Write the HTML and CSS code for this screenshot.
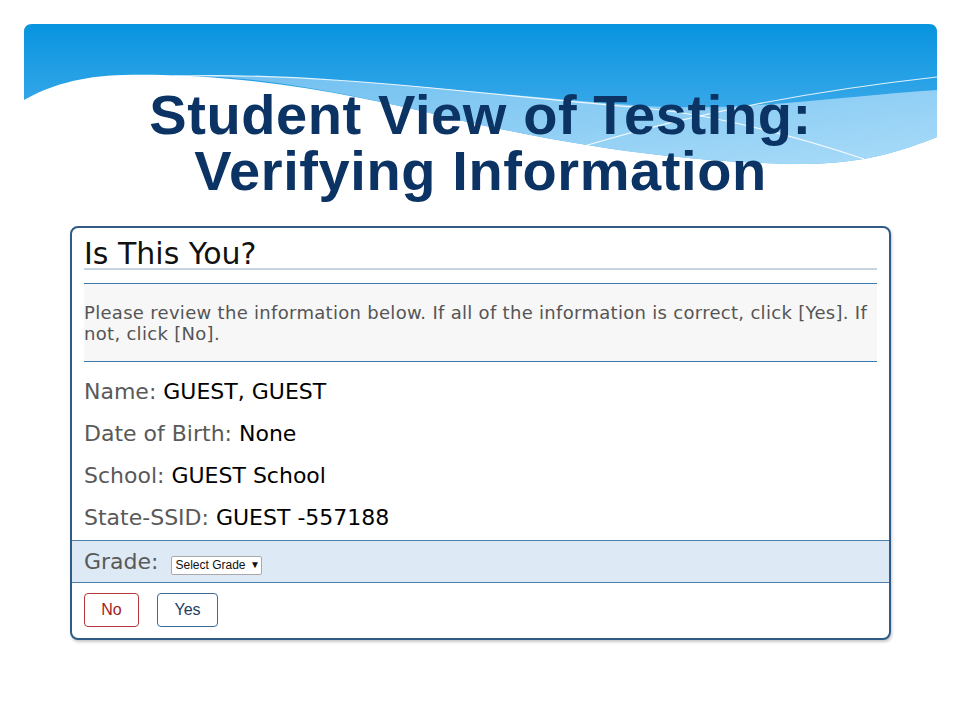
FILE: index.html
```html
<!DOCTYPE html>
<html lang="en">

<head>
  <meta charset="UTF-8">
  <meta name="viewport" content="width=device-width, initial-scale=1.0">
  <title>Student View of Testing</title>
  <link rel="stylesheet" href="styles.css">
</head>

<body>
  <div class="slide">

    <!-- 제목 영역 (물결 배너) -->
    <header class="banner">
      <svg class="banner-bg" viewBox="0 0 913 145" width="913" height="145" aria-hidden="true">
        <defs>
          <linearGradient id="sky" x1="0" y1="0" x2="0" y2="1">
            <stop offset="0" stop-color="#0894df" />
            <stop offset="0.7" stop-color="#3fabea" />
            <stop offset="1" stop-color="#55b5ee" />
          </linearGradient>
          <linearGradient id="band" x1="0" y1="0" x2="1" y2="1">
            <stop offset="0" stop-color="#6fbff0" />
            <stop offset="1" stop-color="#a9dbf8" />
          </linearGradient>
        </defs>
        <path d="M0,76 C25,62 55,52 100,51 C220,49 330,70 430,95 C520,115 640,139 780,140 C840,140 880,126 913,113 L913,8 Q913,0 905,0 L8,0 Q0,0 0,8 Z" fill="url(#sky)" />
        <path d="M150,52 C300,48 450,70 620,82 C720,88 820,72 913,66 L913,113 C880,126 840,140 780,140 C640,139 520,115 430,95 C330,70 220,49 150,52 Z" fill="url(#band)" />
        <path d="M150,52 C300,48 450,70 620,84 C700,92 780,115 840,135" fill="none" stroke="#fff" stroke-width="1.2" opacity="0.85" />
        <path d="M560,122 C650,95 760,70 913,53" fill="none" stroke="#fff" stroke-width="1.2" opacity="0.85" />
      </svg>
      <h1 class="title">Student View of Testing:<br>Verifying Information</h1>
    </header>

    <!-- 학생 정보 확인 카드 -->
    <section class="card">
      <div class="card-body">
        <h2 class="card-title">Is This You?</h2>
        <p class="intro">Please review the information below. If all of the information is correct, click [Yes]. If not, click [No].</p>
        <ul class="info">
          <li><span class="label">Name:</span> GUEST, GUEST</li>
          <li><span class="label">Date of Birth:</span> None</li>
          <li><span class="label">School:</span> GUEST School</li>
          <li><span class="label">State-SSID:</span> GUEST -557188</li>
        </ul>
      </div>

      <div class="grade-row">
        <span class="label">Grade:</span>
        <button type="button" class="grade-select">Select Grade <span class="caret">▼</span></button>
      </div>

      <div class="actions">
        <button type="button" class="btn btn-no">No</button>
        <button type="button" class="btn btn-yes">Yes</button>
      </div>
    </section>

  </div>
</body>

</html>
```

FILE: styles.css
```css
html,
body {
  margin: 0;
  padding: 0;
  background: #fff;
}

body {
  font-family: "DejaVu Sans", Verdana, sans-serif;
  color: #000;
}

ul,
li {
  list-style: none;
  margin: 0;
  padding: 0;
}

button {
  cursor: pointer;
  background: #fff;
  padding: 0;
}

.slide {
  width: 960px;
  height: 720px;
  padding-top: 24px;
  box-sizing: border-box;
}

/* 배너 */
.banner {
  position: relative;
  width: 913px;
  margin-left: 24px;
  padding-top: 63px;
}

.banner-bg {
  position: absolute;
  top: 0;
  left: 0;
  display: block;
}

.title {
  position: relative;
  margin: 0;
  text-align: center;
  font-family: "Liberation Sans", Arial, sans-serif;
  font-weight: bold;
  font-size: 56px;
  line-height: 56px;
  letter-spacing: 0.6px;
  color: #0b3364;
}

/* 카드 */
.card {
  width: 821px;
  box-sizing: border-box;
  margin: 27px 0 0 70px;
  border: 2px solid #2f5b85;
  border-radius: 8px;
  box-shadow: 1px 2px 3px rgba(0, 0, 0, 0.22);
  background: #fff;
}

.card-body {
  padding: 0 12px 1px;
}

.card-title {
  margin: 0;
  padding-top: 12px;
  font-size: 30px;
  line-height: 28px;
  font-weight: normal;
  color: #111;
  border-bottom: 2px solid #c6d4e1;
}

.intro {
  margin: 13px 0 0;
  padding: 18px 0 17px;
  font-size: 18px;
  line-height: 21px;
  letter-spacing: 0.3px;
  color: #555;
  background: #f7f7f7;
  border-top: 1px solid #3b78ad;
  border-bottom: 1px solid #3b78ad;
}

.info {
  padding-top: 9px;
}

.info li {
  font-size: 22px;
  line-height: 42px;
  height: 42px;
}

.label {
  color: #595959;
}

/* 학년 선택 */
.grade-row {
  display: flex;
  align-items: center;
  height: 41px;
  padding: 0 12px;
  font-size: 22px;
  background: #dde9f5;
  border-top: 1px solid #4a80b0;
  border-bottom: 1px solid #4a80b0;
}

.grade-select {
  margin: 7px 0 0 12px;
  width: 91px;
  height: 19px;
  padding: 0 0 0 4px;
  text-align: left;
  font-family: "Liberation Sans", Arial, sans-serif;
  font-size: 12px;
  color: #111;
  border: 1px solid #a9a9a9;
  border-radius: 2px;
  background: #fff;
}

.caret {
  font-size: 10px;
  margin-left: 1px;
  vertical-align: 1px;
}

/* 버튼 */
.actions {
  display: flex;
  gap: 18px;
  padding: 10px 12px 11px;
}

.btn {
  height: 34px;
  border-radius: 4px;
  font-family: "Liberation Sans", Arial, sans-serif;
  font-size: 16px;
}

.btn-no {
  width: 55px;
  border: 1px solid #b5393c;
  color: #a31b1f;
}

.btn-yes {
  width: 61px;
  border: 1px solid #3d6b98;
  color: #1d3d63;
}
```
